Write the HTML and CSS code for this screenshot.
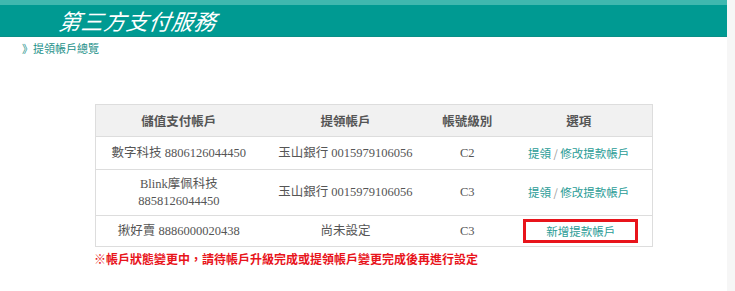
FILE: index.html
```html
<!DOCTYPE html>
<html lang="zh-Hant">
<head>
<meta charset="utf-8">
<link rel="stylesheet" href="styles.css">
</head>
<body>
<div class="page">
  <div class="banner">
    <div class="banner-top"></div>
    <div class="banner-main"><h1 class="title">第三方支付服務</h1></div>
  </div>
  <div class="crumb">》提領帳戶總覽</div>
  <div class="content">
    <table class="accounts">
      <thead>
        <tr><th class="c1">儲值支付帳戶</th><th class="c2">提領帳戶</th><th class="c3">帳號級別</th><th class="c4">選項</th></tr>
      </thead>
      <tbody>
        <tr class="r1"><td>數字科技 8806126044450</td><td>玉山銀行 0015979106056</td><td>C2</td><td><a class="lnk">提領</a><span class="sep"> / </span><a class="lnk">修改提款帳戶</a></td></tr>
        <tr class="r2"><td>Blink摩佩科技<br>8858126044450</td><td>玉山銀行 0015979106056</td><td>C3</td><td><a class="lnk">提領</a><span class="sep"> / </span><a class="lnk">修改提款帳戶</a></td></tr>
        <tr class="r3"><td>揪好賣 8886000020438</td><td>尚未設定</td><td>C3</td><td class="hl-cell"><span class="hl"><a class="lnk">新增提款帳戶</a></span></td></tr>
      </tbody>
    </table>
    <p class="notice">※帳戶狀態變更中，請待帳戶升級完成或提領帳戶變更完成後再進行設定</p>
  </div>
</div>
</body>
</html>
```
FILE: styles.css
```css
html, body { margin: 0; padding: 0; background: #f6f6f6; }
body { font-family: "Liberation Serif", "Noto Sans CJK TC", serif; color: #555; }
.page { width: 727px; background: #fff; height: 291px; }
.banner-top { height: 5px; background: #3fb8af; }
.banner-main { height: 31px; background: #009a92; border-bottom: 1px solid #0a8f87; }
.title {
  margin: 0; padding-left: 57px;
  font-family: "Noto Sans CJK TC", sans-serif; font-weight: 400; font-style: italic;
  font-size: 22px; line-height: 31px; color: #fff; letter-spacing: 0.5px;
  transform: skewX(-8deg); transform-origin: left bottom;
}
.crumb {
  padding: 3px 0 0 22px; height: 17px;
  font-family: "Noto Sans CJK TC", sans-serif; font-size: 11px; line-height: 17px; color: #1a8f88;
}
.content { padding: 47px 0 0 95px; }
.accounts {
  width: 558px; border-collapse: collapse; border: 1px solid #ddd;
  font-size: 12.5px; line-height: 16px; text-align: center;
}
.accounts th {
  background: #f1f1f1; height: 31px; padding: 0; font-weight: 700; color: #555;
  font-family: "Noto Sans CJK TC", sans-serif; font-size: 12.5px; line-height: 16px;
}
.c1 { width: 165px; } .c2 { width: 167px; } .c3 { width: 76px; } .c4 { width: 146px; }
.accounts td { border-top: 1px solid #ddd; padding: 0; color: #555; }
.r1 td { height: 32px; }
.r2 td { height: 45px; line-height: 17px; }
.r3 td { height: 30px; }
.lnk { color: #2a9c96; font-family: "Noto Sans CJK TC", sans-serif; font-size: 11.5px; }
.sep { color: #999; font-size: 11px; font-family: "Noto Sans CJK TC", sans-serif; }
.hl-cell { padding: 0; }
.hl {
  display: inline-block; box-sizing: border-box; width: 115px; height: 24px; line-height: 18px;
  border: 3px solid #e8141b; margin-left: 4px; vertical-align: middle;
}
.notice {
  margin: 4px 0 0 -1px; font-family: "Noto Sans CJK TC", sans-serif; font-weight: 700;
  font-size: 12px; color: #e8141b; line-height: 16px;
}
```
